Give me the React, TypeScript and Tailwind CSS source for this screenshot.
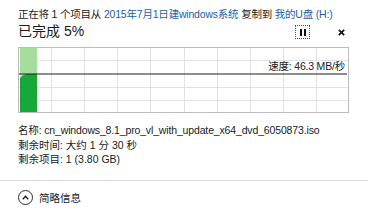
import React from "react";

const font = { fontFamily: '"Liberation Sans", "Noto Sans CJK SC", sans-serif' };

function Graph() {
  const w = 331;
  const h = 66;
  const vx = [1, 2, 3, 4, 5, 6, 7, 8, 9].map((i) => Math.round((i * w) / 10) + 0.5);
  const hy = [1, 3, 4].map((i) => Math.round((i * h) / 5) + 0.5);
  return (
    <svg width={w} height={h} viewBox={`0 0 ${w} ${h}`} className="block">
      <rect x="0" y="0" width={w} height={h} fill="#ffffff" />
      {vx.map((x) => (
        <line key={"v" + x} x1={x} y1={0} x2={x} y2={h} stroke="#e2e2e2" strokeWidth="1" />
      ))}
      {hy.map((y) => (
        <line key={"h" + y} x1={0} y1={y} x2={w} y2={y} stroke="#e2e2e2" strokeWidth="1" />
      ))}
      <rect x="2" y="1" width="17" height="26" fill="#a6dc9c" />
      <path d="M2 31 C4 28 6 27.2 10 27 L19 27 L19 65 L2 65 Z" fill="#17a83a" />
      <path d="M2 27 L10 27 C6 27.2 4 28 2 31 Z" fill="#c9ecc0" />
      <line x1="1" y1="27" x2={w - 2} y2="27" stroke="#1b1b1b" strokeWidth="1.2" />
      <rect x="0.5" y="0.5" width={w - 1} height={h - 1} fill="none" stroke="#bdbdbd" strokeWidth="1" />
    </svg>
  );
}

export default function App() {
  return (
    <div className="w-[368px] h-[213px] bg-white text-[#1a1a1a] flex flex-col overflow-hidden" style={font}>
      <div className="pl-[18px] pr-[19px] pt-[6px] flex flex-col">
        <div className="text-[10.5px] leading-[16px] whitespace-nowrap tracking-[-0.2px]">
          正在将 1 个项目从 <span className="text-[#1c5ea8]">2015年7月1日建windows系统</span> 复制到{" "}
          <span className="text-[#1c5ea8]">我的U盘 (H:)</span>
        </div>
        <div className="h-[19px] flex items-center">
          <div className="text-[14px] leading-[19px] flex-1">已完成 5%</div>
          <div className="w-[15px] h-[14px] border border-dotted border-[#555] flex items-center justify-center gap-[2px] mt-[1px]">
            <div className="w-[2px] h-[7px] bg-[#111]" />
            <div className="w-[2px] h-[7px] bg-[#111]" />
          </div>
          <div className="w-[7px] h-[7px] ml-[28px] mr-[4px] mt-[2px]">
            <svg width="7" height="7" viewBox="0 0 7 7" className="block">
              <path d="M0.8 0.8 L6.2 6.2 M6.2 0.8 L0.8 6.2" stroke="#111" strokeWidth="1.7" />
            </svg>
          </div>
        </div>
        <div className="relative mt-[6px] w-[331px] h-[66px]">
          <Graph />
          <div className="absolute right-[4px] top-[11px] text-[10.5px] leading-[16px] whitespace-nowrap tracking-[-0.2px]">
            速度: 46.3 MB/秒
          </div>
        </div>
        <div className="mt-[10px] text-[10.5px] leading-[14.5px] whitespace-nowrap">
          <div className="tracking-[-0.15px]">名称: cn_windows_8.1_pro_vl_with_update_x64_dvd_6050873.iso</div>
          <div>剩余时间: 大约 1 分 30 秒</div>
          <div>剩余项目: 1 (3.80 GB)</div>
        </div>
      </div>
      <div className="mt-[13px] h-[1px] bg-[#dcdcdc]" />
      <div className="pl-[18px] flex items-center h-[38px] pt-[2px]">
        <div className="w-[15px] h-[15px] rounded-full border-[1.3px] border-[#2a2a2a] flex items-center justify-center">
          <svg width="7" height="5" viewBox="0 0 7 5" className="block mb-[1px]">
            <path d="M0.8 4.2 L3.5 1.3 L6.2 4.2" fill="none" stroke="#1a1a1a" strokeWidth="1.4" />
          </svg>
        </div>
        <div className="ml-[6px] text-[10.5px] leading-[16px]">简略信息</div>
      </div>
    </div>
  );
}
